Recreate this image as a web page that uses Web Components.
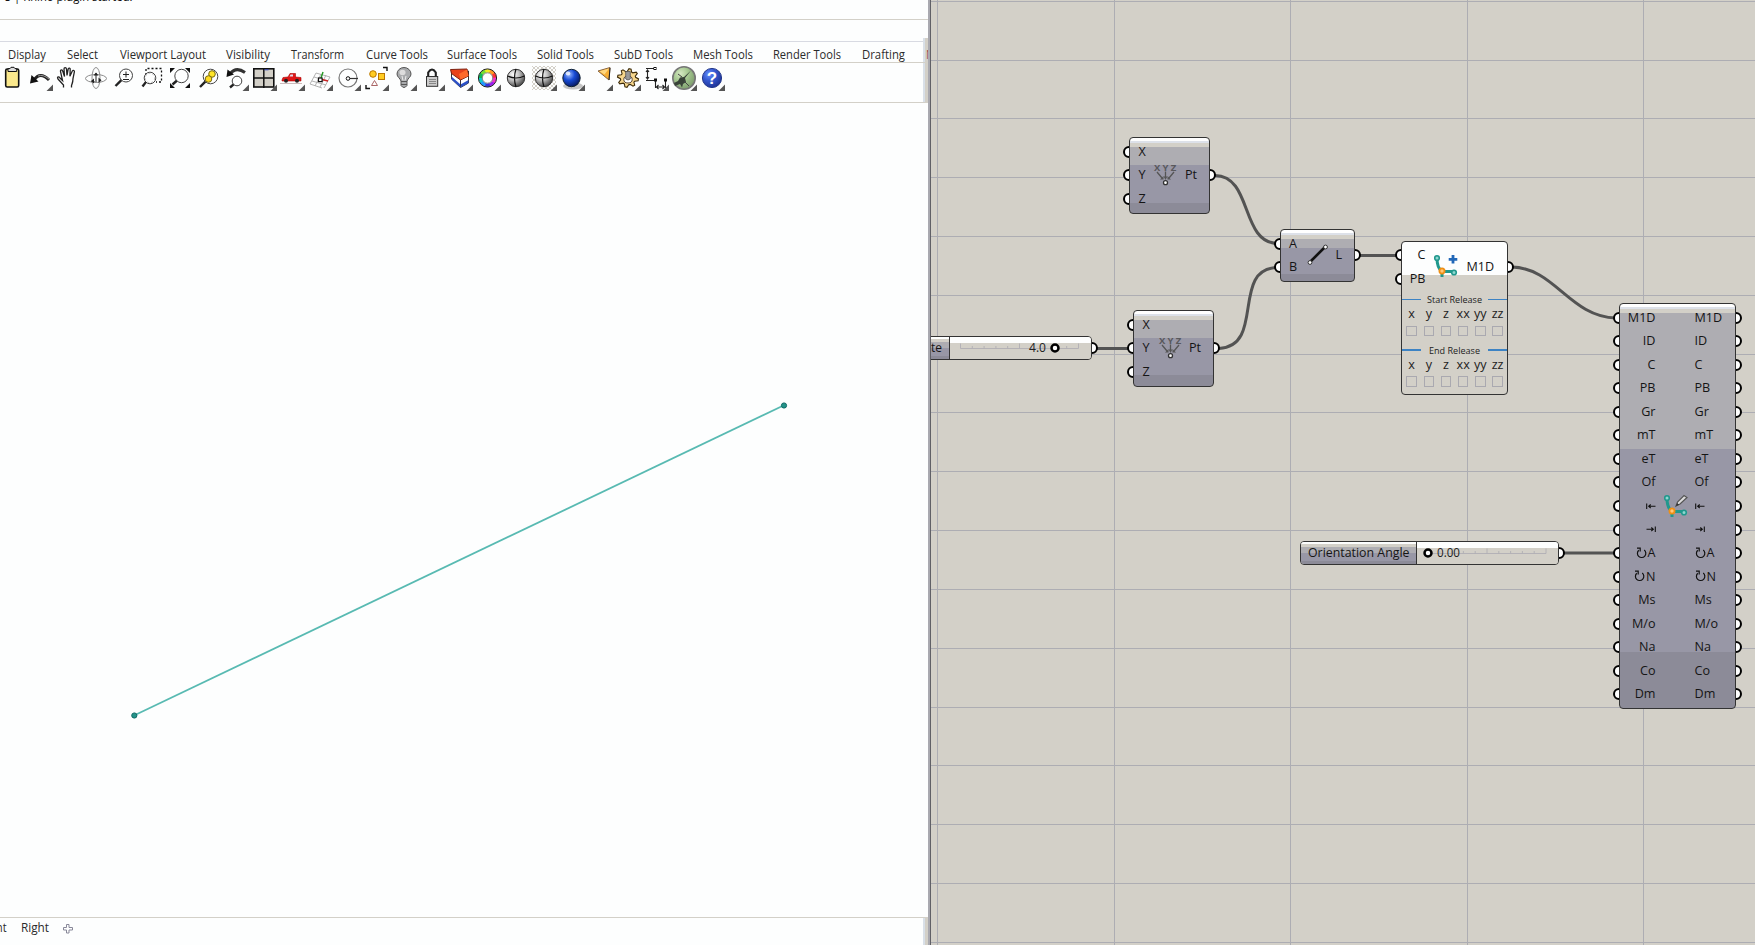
<!DOCTYPE html>
<html lang="en"><head><meta charset="utf-8"><title>Modeler</title>
<style>html,body{margin:0;height:100%;overflow:hidden;background:#fdfefe}body{font-family:"Open Sans","Noto Sans",sans-serif}</style></head>
<body><app-shell></app-shell>
<script>
const define=(n,render)=>customElements.define(n,class extends HTMLElement{
 connectedCallback(){if(this.shadowRoot)return;this.attachShadow({mode:'open'}).innerHTML=render(this)}});

/* text fitted to a given width */
define('fit-text',e=>{const w=+e.getAttribute('w'),s=e.getAttribute('size')||12,c=e.getAttribute('color')||'#2b2b2b',h=+(e.getAttribute('h')||18),b=e.getAttribute('base')||13;
 return `<style>:host{display:block;flex:none;width:${w}px;height:${h}px}svg{display:block;overflow:visible}text{font-family:"Open Sans","Noto Sans",sans-serif}</style>
 <svg width="${w}" height="${h}"><text x="0" y="${b}" font-size="${s}" fill="${c}" textLength="${w}" lengthAdjust="spacingAndGlyphs">${e.getAttribute('text')}</text></svg>`});

const tabs=[['Display',8,38],['Select',67,31],['Viewport Layout',120,86],['Visibility',226,44],['Transform',291,53],['Curve Tools',365.5,62],['Surface Tools',447,70],['Solid Tools',537,57],['SubD Tools',614,59],['Mesh Tools',693,60],['Render Tools',773,68],['Drafting',862,43]];
define('tab-strip',()=>{let at=0;return `<style>:host{display:flex;height:20px;border-bottom:1px solid #d3d0c8;overflow:hidden}fit-text{padding-top:4px}</style>`+
 [...tabs,['N',925.5,8]].map(([t,x,w])=>{const m=x-at;at=x+w;return `<fit-text style="margin-left:${m}px" text="${t}" w="${w}" size="12" ${t=='N'?'color="#a05050"':''}></fit-text>`}).join('')});

const mag=(x,y,r,hx,hy)=>{const k=r*.71;return `<circle cx="${x}" cy="${y}" r="${r}" fill="#fff" fill-opacity=".6" stroke="#444"/><path d="M${x-k} ${y+k}L${hx} ${hy}" stroke="#222" stroke-width="2.4"/>`};
const sphere=(g)=>`<circle cx="15" cy="15" r="8.7" fill="url(#${g})" stroke="#333"/>`;
const grad=(id,a,b,c)=>`<defs><radialGradient id="${id}" cx=".35" cy=".3" r=".75"><stop offset="0" stop-color="${a}"/><stop offset=".45" stop-color="${b}"/><stop offset="1" stop-color="${c}"/></radialGradient></defs>`;
const seams='<path d="M15 6Q12 15 15 24M6.5 13Q15 17 23.5 13" stroke="#111" stroke-width="1.2" fill="none"/>';
const wheel=(()=>{const c=['#f33','#f92','#ee2','#7d3','#1b5','#1cc','#29f','#33d','#92e','#e3c'];return c.map((k,i)=>{const a=i*36*Math.PI/180,b=(i+1.1)*36*Math.PI/180,p=t=>`${14.5+7.2*Math.cos(t)} ${15-7.2*Math.sin(t)}`;return `<path d="M${p(a)}A7.2 7.2 0 0 0 ${p(b)}" stroke="${k}" stroke-width="3.6" fill="none"/>`}).join('')+'<circle cx="14.5" cy="15" r="9.1" fill="none" stroke="#222" stroke-width="1"/><circle cx="14.5" cy="15" r="5.2" fill="#fff" stroke="#555" stroke-width=".7"/>'})();
const gear=(()=>{let s='';for(let i=0;i<32;i++){const a=(i+.5)*Math.PI/16,r=(i%4<2)?10.6:7.6;s+=`${i?'L':'M'}${(15+r*Math.cos(a)).toFixed(1)} ${(15+r*.88*Math.sin(a)).toFixed(1)}`}return s+'Z'})();
const icons=[
[0,'<rect x="8.7" y="6" width="13" height="18" rx="1.5" fill="#fbe98c" stroke="#111" stroke-width="1.6"/><path d="M11 8.5V5.6h2l1-1.3h3l1 1.3h1.7v2.9Z" fill="#ddd" stroke="#111"/>'],
[1,'<path d="M9 17Q15 8 24 17" fill="none" stroke="#222" stroke-width="3"/><path d="M13 13Q18 11 24 16" fill="none" stroke="#999"/><path d="M5 20.500L6.500 12L13.500 18.500Z" fill="#111"/>'],
[0,'<path d="M10.500 24.500V22L5 16C3.500 13.500 6 13.500 7 15L9.500 17.500L7.500 8.500C7.200 6.500 9.300 6.300 9.800 8.300L11.500 13.500L11 6C11 4.200 13.300 4.200 13.500 6L14 12.500L15.200 6C15.600 4.500 17.500 5 17.200 6.700L16.900 13.200L19.300 8C20.200 6.700 21.900 7.500 21.300 9.200L20 15.500C20 19 19.400 20 18.500 22.500V24.500" fill="#fff" stroke="#222" stroke-width="1.300"/>'],
[0,'<g fill="none" stroke="#8d8d8d"><ellipse cx="15" cy="15.500" rx="10.500" ry="4"/><ellipse cx="15" cy="15" rx="4" ry="10.500"/></g><path d="M15 10v9M10.500 18.500h3" stroke="#222" stroke-width="1" fill="none"/><path d="M12.500 12.500l2.500-3l2.500 3ZM17.500 14.500v5.500l3-2.700ZM13 15.500v5l-3-2.500Z" fill="#222"/>'],
[0,mag(17,12.5,6.5,6.5,23)+'<path d="M14 11.500h6M17 8.500v6M14 16.500h6" stroke="#222" fill="none"/>'],
[0,'<path d="M9 12V5.500H24.500V19H19" fill="none" stroke="#111" stroke-width="1.300" stroke-dasharray="2 2"/>'+mag(13,15,5.8,5.5,23.5)+'<circle cx="13" cy="15" r="4.700" fill="none" stroke="#bbb" stroke-dasharray="2 2"/>'],
[0,'<path d="M5 5h5L5 10ZM25 5v5L20 5ZM5 25v-5l5 5ZM25 25h-5l5-5Z" fill="#111"/>'+mag(16.5,13,6.7,7.5,21.5)],
[0,mag(17.5,13.5,7.3,7,24)+'<circle cx="19" cy="11" r="3.300" fill="#ffe527" stroke="#776a10"/><circle cx="15.500" cy="16" r="3.300" fill="#ffdb20" stroke="#776a10"/>'],
[1,'<path d="M9 11Q15 3 24 9.500" fill="none" stroke="#333" stroke-width="3"/><path d="M5.500 14L6.500 6.500L13 11.500Z" fill="#111"/>'+mag(16,18,4.8,9,24.5)],
[1,'<rect x="4.800" y="5.800" width="20" height="18.200" fill="#d3d0c8" stroke="#111" stroke-width="1.600"/><path d="M14.800 5v20M4 14.900h21" stroke="#111" stroke-width="1.500"/><path d="M15.500 6.800h4" stroke="#34b"/>'],
[1,'<path d="M3 20.500h22" stroke="#cbb"/><path d="M5 17l1-2.500l5-.500l2-3.500h5.500v3.500l5.500 .500v3.500H5Z" fill="#e01818" stroke="#a00" stroke-width=".600"/><path d="M13.500 11.500h2.500v2h-3.500Z" fill="#dde"/><circle cx="9" cy="17.800" r="2" fill="#222"/><circle cx="20" cy="17.800" r="2" fill="#222"/>'],
[1,'<g stroke="#aaa" fill="none" stroke-width=".900"><path d="M11 10l14 4M9 14l14 4M7 18l14 4M5 21l12 4M11 10L5 21M16 11l-6 12M21 12l-6 12M25 14l-6 11"/></g><path d="M15 16l8 2" stroke="#c22" stroke-width="1.400"/><path d="M16 15l2-6" stroke="#292" stroke-width="1.400"/><rect x="13.500" y="15" width="3.600" height="3.600" fill="#fff" stroke="#111" stroke-width="1.200"/>'],
[1,'<circle cx="15" cy="15" r="9" fill="none" stroke="#777" stroke-width="1.200"/><path d="M16 15.500h9" stroke="#333" stroke-width="1.200"/><circle cx="15" cy="15.500" r="1.800" fill="#fff" stroke="#111"/>'],
[1,'<circle cx="12" cy="11" r="3.300" fill="#fc2" stroke="#b70"/><rect x="17.500" y="10.500" width="6" height="6" fill="#fc2" stroke="#b70"/><path d="M13.500 17.500l3 5h-6Z" fill="#fff" stroke="#a66"/><path d="M5 22v3.500h4M22 4.500h4V8" stroke="#111" fill="none" stroke-width="1.400"/>'],
[1,'<path d="M12 18C11 15 8 14 8 11a7 6.500 0 0 1 14 0C22 14 19 15 18 18v4.500q-3 4-6 0Z" fill="#a9abad" stroke="#555"/><path d="M12 18.500h6M12 21.500h6" stroke="#555"/><ellipse cx="13.500" cy="9.500" rx="3" ry="2.700" fill="#ddd"/><path d="M13 13l1 4.500M17 13l-1 4.500" stroke="#eee"/>'],
[1,'<path d="M11.200 14v-4.500q3.800-6 7.600 0v4.500" fill="none" stroke="#222" stroke-width="2.100"/><rect x="9.500" y="13.500" width="11.200" height="9.800" fill="#ccc" stroke="#333"/><path d="M12 16.500h7M12 18.500h7M12 20.500h7" stroke="#888"/>'],
[1,'<path d="M6.500 8v8l9 8.500l8-4.500V8l-8 7Z" fill="#fff" stroke="#333"/><path d="M6.500 13.500l9 8l8-4.500v3l-8 4.500l-9-8Z" fill="#2b50c8"/><path d="M15.500 15.500v8" stroke="#334"/><path d="M5.500 6.500L22 6l1.500 7l-8 4L6.500 10.500Z" fill="#e8421c" stroke="#7b2110"/><path d="M15.500 16.500L14 11l8-4.500l1.500 6.500Z" fill="#ff6a2a"/>'],
[1,wheel],
[0,grad('g','#fff','#c0c0c0','#414141')+sphere('g')+seams],
[1,'<defs><pattern id="d" width="4" height="4" patternUnits="userSpaceOnUse"><path d="M0 0h2v2H0ZM2 2h2v2H2Z" fill="#d3d0c8"/></pattern></defs><path d="M3 3h24v24H3Z" fill="url(#d)"/>'+grad('h','#fff','#c0c0c0','#414141')+sphere('h')+seams],
[1,'<ellipse cx="16" cy="23" rx="10" ry="3.500" fill="#c4c4c4"/>'+grad('b','#9ebcff','#174bd5','#06165d')+'<circle cx="14.500" cy="15" r="8.700" fill="url(#b)" stroke="#123"/><ellipse cx="11" cy="10.500" rx="2.300" ry="2" fill="#fff" opacity=".75"/>'],
[1,'<path d="M13 8L25 4.500L24 17Z" fill="#f7ae35" stroke="#864"/><path d="M14.500 8.200l9.500-2.700-4.500 6Z" fill="#ffd780"/><path d="M24 17l1-12" stroke="#222"/>'],
[1,`<path d="${gear}" fill="#f6d68c" stroke="#3d2c0a" stroke-width="1.100"/><ellipse cx="15" cy="16.500" rx="4.200" ry="3.500" fill="#fff" stroke="#543"/><path d="M12.700 8.500h4.600v7.500q-2.300 2-4.600 0Z" fill="#999" stroke="#555" stroke-width=".800"/>`],
[1,'<g fill="none" stroke="#222" stroke-width="1.100"><path d="M5 5.500h9M6.500 7v9M5 9l1.500-2L8 9M5 14l1.500 2L8 14M5 17.500h9M14.500 17v8M24.500 17v8M15 24h10M17.500 22l-2 2l2 2M21.500 22l2 2l-2 2"/></g><g fill="#fff" stroke="#111"><rect x="13" y="4.500" width="2" height="2"/><rect x="13.500" y="16" width="2" height="2"/><rect x="23.500" y="16" width="2" height="2"/></g>'],
[1,grad('e','#d5e8c2','#a5c890','#7b9a6c')+'<circle cx="15" cy="15" r="11.200" fill="url(#e)" stroke="#777" stroke-width="1.600"/><path d="M5 20l4-2l2-3.500l4-.500l7-6.500l-6 7.500l1 4l-3 2l-1 3.500l-2-3.500l-5 2Z" fill="#384238"/><path d="M9 11l4 3M15 18l5 5" stroke="#444"/>'],
[1,grad('q','#6690ff','#3558cf','#1e3394')+'<circle cx="15" cy="15" r="9.600" fill="url(#q)" stroke="#24388b"/><text x="15" y="21" text-anchor="middle" font-family="Liberation Sans,sans-serif" font-weight="700" font-size="17" fill="#fff">?</text>']];
define('tool-icon',e=>{const [m,s]=icons[+e.getAttribute('n')];return `<style>:host{display:block;width:28px;height:28px;flex:none}svg{display:block}</style><svg width="28" height="28" viewBox="0 0 28 28">${s}${m?'<path d="M28 21.500V28H21.500Z" fill="#555"/>':''}</svg>`});
define('tool-bar',()=>`<style>:host{display:flex;height:39px;border-bottom:1px solid #d3d0c8;padding-left:0}tool-icon:first-of-type{margin-left:-3px}</style>`+icons.map((_,i)=>`<tool-icon n="${i}"></tool-icon>`).join(''));

define('model-view',()=>`<style>:host{display:block;flex:1;min-height:0;overflow:hidden}svg{display:block}</style><svg width="928" height="814" viewBox="0 103 928 814"><path d="M134 715.500L784 405.300" stroke="#58bab2" stroke-width="1.800"/><g fill="#239389" stroke="#126c67"><circle cx="134.300" cy="715.500" r="2.600"/><circle cx="784" cy="405.500" r="2.600"/></g></svg>`);
define('side-lip',()=>`<style>:host{display:block;width:5px;background:linear-gradient(90deg,#d9e0e8 2px,#d3d0c8 2px)}</style>`);
define('view-tabs',()=>`<style>:host{display:flex;box-sizing:border-box;height:28px;border-top:1px solid #d3d0c8;padding-top:1px;overflow:hidden}side-lip{margin:-1px 0 0 auto}svg{margin:5px 0 0 14px}</style><fit-text text="nt" w="10.500" style="margin-left:-4.500px"></fit-text><fit-text text="Right" w="28" style="margin-left:15px"></fit-text><svg width="10" height="10" viewBox="0 0 10 10"><path d="M3.500.5h2.500v3h3.500v2.500H6v3H3.500V6H.5V3.500h3Z" fill="none" stroke="#889"/></svg><side-lip></side-lip>`);
define('rhino-pane',()=>`<style>:host{display:flex;flex-direction:column;width:928px;height:945px;flex:none;background:#fdfefe;overflow:hidden}
 .log{height:19px;border-bottom:1px solid #d3d0c8;display:flex}.log fit-text{margin:-12px 0 0 -5px}.cmd{height:21px;border-bottom:1px solid #d8dae2}
 .bars{position:relative}.bars side-lip{position:absolute;z-index:-1;right:0;top:-4px;height:65px}.bars{z-index:0}</style>
 <div class="log"><fit-text text="P 5 | Rhino plugin started." w="137.500" color="#101010"></fit-text></div><div class="cmd"></div><div class="bars"><side-lip></side-lip><tab-strip></tab-strip><tool-bar></tool-bar></div><model-view></model-view><view-tabs></view-tabs>`);

/* node graph */
const bones='<path d="M3 3Q3 13 8 16.500M8 16.500H20M8 16v6" stroke="#21988d" stroke-width="3" fill="none"/><circle cx="3" cy="3" r="2.300" fill="#8ed6cf" stroke="#21988d" stroke-width="1.600"/><circle cx="20" cy="17.500" r="2.300" fill="#8ed6cf" stroke="#21988d" stroke-width="1.600"/><circle cx="8" cy="16" r="2.600" fill="#ffc77a" stroke="#ef8f14" stroke-width="1.800"/>';
const glyphs={
 xyz:'<svg width="24" height="26"><g font-family="Open Sans,sans-serif" font-size="9.500" font-weight="700" fill="#58585c"><text x="0" y="8.500">X</text><text x="8.500" y="8.500">Y</text><text x="16.700" y="8.500">Z</text></g><path d="M3 10l5 6M11.500 9.500v6M20 10l-5 6" stroke="#555" stroke-width="1.300" fill="none"/><path d="M6 17.500h3.500v-3.500ZM9.700 14.500h3.600L11.500 18ZM13.500 17.500h3.500l-3.500-3.500Z" fill="#555"/><circle cx="11.500" cy="20.700" r="2" fill="#fff" stroke="#333" stroke-width="1.300"/></svg>',
 line:'<svg width="24" height="24"><path d="M4 19L19 4" stroke="#111" stroke-width="2.600"/><circle cx="4" cy="19.500" r="1.900" fill="#fff" stroke="#333"/><circle cx="19.500" cy="4" r="1.900" fill="#fff" stroke="#333"/></svg>',
 make:`<svg width="24" height="24">${bones}<path d="M19 0v8.500M14.700 4.300h8.600" stroke="#2268b8" stroke-width="2.800"/></svg>`,
 edit:`<svg width="24" height="24">${bones}<path d="M12 11l1.500-4l6.500-6.500l3 2l-7 6.500Z" fill="#ddd" stroke="#555" stroke-width="1.200"/><path d="M12 11l1.200-3l2 1.800Z" fill="#333"/></svg>`};
const P=23.55;
const sym={'|<':'<svg width="10" height="8"><path d="M.7 1.500v5.500M9.500 4.300H3M4.700 2.500L2.700 4.300L4.700 6" fill="none" stroke="#111" stroke-width="1.100"/></svg>','>|':'<svg width="10" height="8"><path d="M9.300 1.500v5.500M.5 4.300h6.500M5.300 2.500l2 1.800L5.300 6" fill="none" stroke="#111" stroke-width="1.100"/></svg>'};
const turn='<svg width="11" height="12"><path d="M2.800 3.200A4.200 4.200 0 1 0 8.200 3M1 1.200h3.200v3.200" fill="none" stroke="#111" stroke-width="1.200"/></svg>';
const lab=t=>sym[t]||(t[0]=='@'?turn+t[1]:t);
define('node-port',e=>`<style>:host{display:flex;align-items:center;height:${P}px;width:6px;overflow:hidden;justify-content:${e.hasAttribute('out')?'flex-end':'flex-start'}}i{box-sizing:border-box;flex:none;width:12px;height:12px;border:2.400px solid #000;border-radius:50%;background:#fff}</style><i></i>`);
define('graph-node',e=>{const a=k=>e.getAttribute(k),n=k=>+a(k),ins=a('ins').split(' '),outs=a('outs').split(' ');
 const col=(l,c)=>`<div class="${c}" style="padding-top:${(c=='in'?n('iy'):n('oy'))-n('y')-P/2-1.4}px">${l.map(t=>`<span>${lab(t)}</span>`).join('')}</div>`;
 const ports=(l,y,o)=>`<div class="ports" style="${o?'right:-6px':'left:-6px'};top:${y-n('y')-P/2-.2}px">${l.map(()=>`<node-port ${o?'out':''}></node-port>`).join('')}</div>`;
 const b=a('bands').split(' ').map(v=>v-n('y')-1),bg=a('kind')=='release'?`linear-gradient(#fdfefe ${b[0]}px,#d3d0c8 ${b[0]}px)`:`linear-gradient(#fff 3px,#dde1e9 3px,#dde1e9 5px,#d3d0c8 5px,#d3d0c8 ${b[0]}px,#aeadb2 ${b[0]}px,#aeadb2 ${b[1]}px,#9897a6 ${b[1]}px,#9897a6 ${b[2]}px,#8c8b98 ${b[2]}px)`;
 return `<style>:host{position:absolute;left:${n('x')-931}px;top:${n('y')}px;width:${n('w')}px;height:${n('h')}px}
 .ports{position:absolute}.box{box-sizing:border-box;position:relative;width:100%;height:100%;border:1.400px solid #333;border-radius:4px;background:${bg};display:flex;font:12.600px/${P}px "Open Sans","Noto Sans",sans-serif;color:#151515;overflow:hidden}
 span{display:flex;align-items:center;height:${P}px;gap:1px;white-space:nowrap}.in{width:${n('lw')}px;flex:none}.in span{justify-content:${a('align')||'flex-start'};padding-left:${a('pad')||0}px}.out{margin-left:auto;width:${n('rw')}px;flex:none}
 .ic{position:absolute;left:${n('ix')-n('x')-1}px;top:${n('icy')-n('y')-1}px}.ic svg{display:block;overflow:visible}slot{display:block}.extra{position:absolute;left:0;right:0;top:51px}</style>
 ${ports(ins,n('iy'))}${ports(outs,n('oy'),1)}<div class="box">${col(ins,'in')}<div class="ic">${glyphs[a('icon')]}</div>${col(outs,'out')}<div class="extra"><slot></slot></div></div>`});
define('release-grid',e=>`<style>:host{display:block;height:50.500px;color:#222}.h{display:grid;grid-template-columns:19px 1fr 19px;align-items:center;height:13px}.h b{height:1.500px;background:#3d83c4}fit-text{margin:auto}
 .g{display:flex;padding:0 0 0 1px}.c{width:17.200px;display:flex;flex-direction:column;align-items:center;font:12.600px/16px "Open Sans",sans-serif;height:30px;justify-content:space-between}.c i{box-sizing:border-box;width:10.500px;height:10.500px;border:1px solid #aaa9b0}</style>
 <div class="h"><b></b><fit-text text="${e.getAttribute('label')}" w="${e.getAttribute('w')}" size="9.500" h="13" base="10" color="#222"></fit-text><b></b></div><div class="g">${['x','y','z','xx','yy','zz'].map(t=>`<div class="c">${t}<i></i></div>`).join('')}</div>`);
define('number-slider',e=>{const a=k=>+e.getAttribute(k),tk=[];for(let i=0;i<=10;i++)tk.push(`M${a('t')+i*11.8} ${i%5?9:6.5}V11.500`);
 return `<style>:host{position:absolute;left:${a('x')-931}px;top:${a('y')}px;width:${a('w')}px;height:24px}.b{position:relative;box-sizing:border-box;height:24px;border:1.400px solid #333;border-radius:4px;display:flex;overflow:hidden;background:#d3d0c8}.l{box-sizing:border-box;flex:none;width:${a('s')}px;border-right:1.400px solid #333;background:linear-gradient(#fdfefe 2px,#d3d0c8 2px,#d3d0c8 5px,#aeadb2 5px,#aeadb2 11px,#9897a6 11px,#9897a6 19px,#8c8b98 19px);display:flex;justify-content:flex-end;padding:2.400px 7px 0 0}.r{flex:1;background:linear-gradient(#fdfefe 5.500px,#d3d0c8 5.500px)}svg{display:block;overflow:visible}node-port{position:absolute;right:-6px;top:0}</style>
 <node-port out></node-port><div class="b"><div class="l"><fit-text text="${e.getAttribute('label')}" w="${a('lw')}" size="12.600" color="#151515"></fit-text></div><div class="r"><svg width="100%" height="22"><path d="M${a('t')} 11.500h118${tk.join('')}" stroke="#b0afb4" stroke-width=".900" fill="none"/><circle cx="${a('k')}" cy="11" r="3.500" fill="#fff" stroke="#000" stroke-width="2.500"/><text x="${a('v')}" y="15.400" font-family="Open Sans,sans-serif" font-size="12.600" fill="#222" textLength="${a('vw')}" lengthAdjust="spacingAndGlyphs">${e.getAttribute('value')}</text></svg></div></div>`});
const all='M1D ID C PB Gr mT eT Of |< >| @A @N Ms M/o Na Co Dm';
define('graph-canvas',()=>{let g='';for(let i=0;i<5;i++)g+=`M${Math.floor(937.5+i*176.5)+.5} 0V945`;for(let i=0;i<17;i++)g+=`M931 ${Math.floor(1.2+i*58.82)+.5}H1755`;
 return `<style>:host{display:block;position:relative;flex:1;min-width:0;height:945px;background:#d3d0c8;overflow:hidden}svg{display:block}</style>
 <svg width="824" height="945" viewBox="931 0 824 945"><path d="${g}" stroke="#adadb3"/><g fill="none" stroke="#535353" stroke-width="3"><path d="M1215 175.500C1253 176 1240 243 1278 243.500M1219 348.500C1266 346 1230 268 1278 267.500M1359 255.500H1398M1096 348.500H1130M1512 267C1555 268 1570 317 1616 318M1563 553H1616"/></g></svg>
 <number-slider x="900" y="336" w="191.500" s="48.500" label="te" lw="11" t="10.500" k="105" v="79" vw="17" value="4.0"></number-slider>
 <number-slider x="1299.800" y="541" w="259" s="116.500" label="Orientation Angle" lw="101.500" t="11" k="11" v="20" vw="23" value="0.00"></number-slider>
 <graph-node x="1129" y="137" w="81" h="77" ins="X Y Z" outs="Pt" iy="152" oy="175.500" bands="147 165 203" lw="30" pad="8.500" rw="24" icon="xyz" ix="1154" icy="162"></graph-node>
 <graph-node x="1133" y="310" w="81" h="77" ins="X Y Z" outs="Pt" iy="325" oy="348.500" bands="320 338 375" lw="30" pad="8.500" rw="24" icon="xyz" ix="1158.500" icy="335"></graph-node>
 <graph-node x="1280" y="229" w="75" h="53" ins="A B" outs="L" iy="243.800" oy="255.500" bands="239 248 274" lw="25" pad="8" rw="18.500" icon="line" ix="1306" icy="242.500"></graph-node>
 <graph-node kind="release" x="1401" y="241" w="107" h="154" ins="C PB" outs="M1D" iy="255.500" oy="267" bands="275" lw="23.500" align="flex-end" rw="40.500" icon="make" ix="1434" icy="255"><release-grid label="Start Release" w="55"></release-grid><release-grid label="End Release" w="51"></release-grid></graph-node>
 <graph-node x="1619" y="303" w="117" h="406" ins="${all}" outs="${all}" iy="317.800" oy="317.800" bands="313 449 652" lw="35.500" align="flex-end" rw="40.500" icon="edit" ix="1663.500" icy="494.500"></graph-node>`});
define('app-shell',()=>`<style>:host{display:flex;width:1755px;height:945px;overflow:hidden}.d{width:3px;flex:none;background:linear-gradient(90deg,#a9a9b0 2px,#606066 2px)}</style><rhino-pane></rhino-pane><div class="d"></div><graph-canvas></graph-canvas>`);
</script></body></html>
